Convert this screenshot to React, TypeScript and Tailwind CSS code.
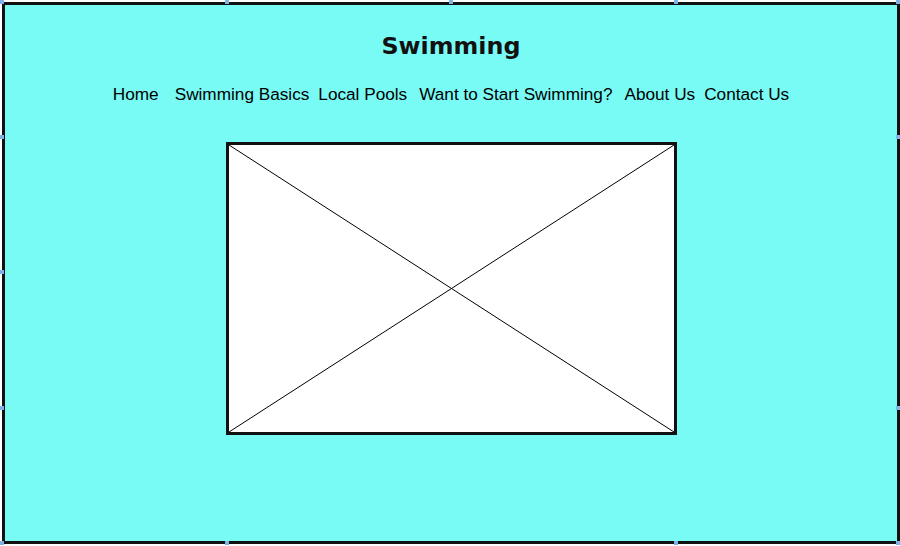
const navItems = [
  { label: "Home", gap: "ml-0" },
  { label: "Swimming Basics", gap: "ml-[16px]" },
  { label: "Local Pools", gap: "ml-[9px]" },
  { label: "Want to Start Swimming?", gap: "ml-[12px]" },
  { label: "About Us", gap: "ml-[12px]" },
  { label: "Contact Us", gap: "ml-[9px]" },
];

// little selection handles left over from the wireframe tool
const handles = [
  "left-[0px] top-[0px]",
  "left-[225px] top-[0px]",
  "left-[449px] top-[0px]",
  "left-[674px] top-[0px]",
  "left-[896px] top-[0px]",
  "left-[0px] top-[135px]",
  "left-[0px] top-[270px]",
  "left-[0px] top-[406px]",
  "left-[0px] top-[541px]",
  "left-[896px] top-[135px]",
  "left-[896px] top-[406px]",
  "left-[225px] top-[541px]",
  "left-[674px] top-[541px]",
  "left-[896px] top-[541px]",
];

function PlaceholderImage() {
  return (
    <div className="relative w-[451px] h-[293px] border-[3px] border-[#111] bg-white">
      <svg className="absolute inset-0 w-full h-full" viewBox="0 0 445 287" preserveAspectRatio="none">
        <line x1="0" y1="0" x2="445" y2="287" stroke="#000" strokeWidth="1" />
        <line x1="445" y1="0" x2="0" y2="287" stroke="#000" strokeWidth="1" />
      </svg>
    </div>
  );
}

export default function App() {
  return (
    <div className="relative w-[900px] h-[546px] bg-white overflow-hidden">
      <div className="ml-[2px] mt-[2px] w-[898px] h-[542px] border-[3px] border-[#111] bg-[#79fbf5] flex flex-col items-center">
        <h1
          className="mt-[27px] text-[23.8px] leading-[28px] font-bold text-[#111]"
          style={{ fontFamily: '"DejaVu Sans", Verdana, sans-serif' }}
        >
          Swimming
        </h1>
        <nav
          className="mt-[24px] flex text-[17.2px] leading-[20px] text-black"
          style={{ fontFamily: '"Liberation Sans", Arial, sans-serif' }}
        >
          {navItems.map((item) => (
            <span key={item.label} className={item.gap}>
              {item.label}
            </span>
          ))}
        </nav>
        <div className="mt-[38px] ml-[1px]">
          <PlaceholderImage />
        </div>
      </div>
      {handles.map((pos) => (
        <div key={pos} className={`absolute ${pos} w-[4px] h-[4px] bg-[#7fb3e6]`} />
      ))}
    </div>
  );
}
